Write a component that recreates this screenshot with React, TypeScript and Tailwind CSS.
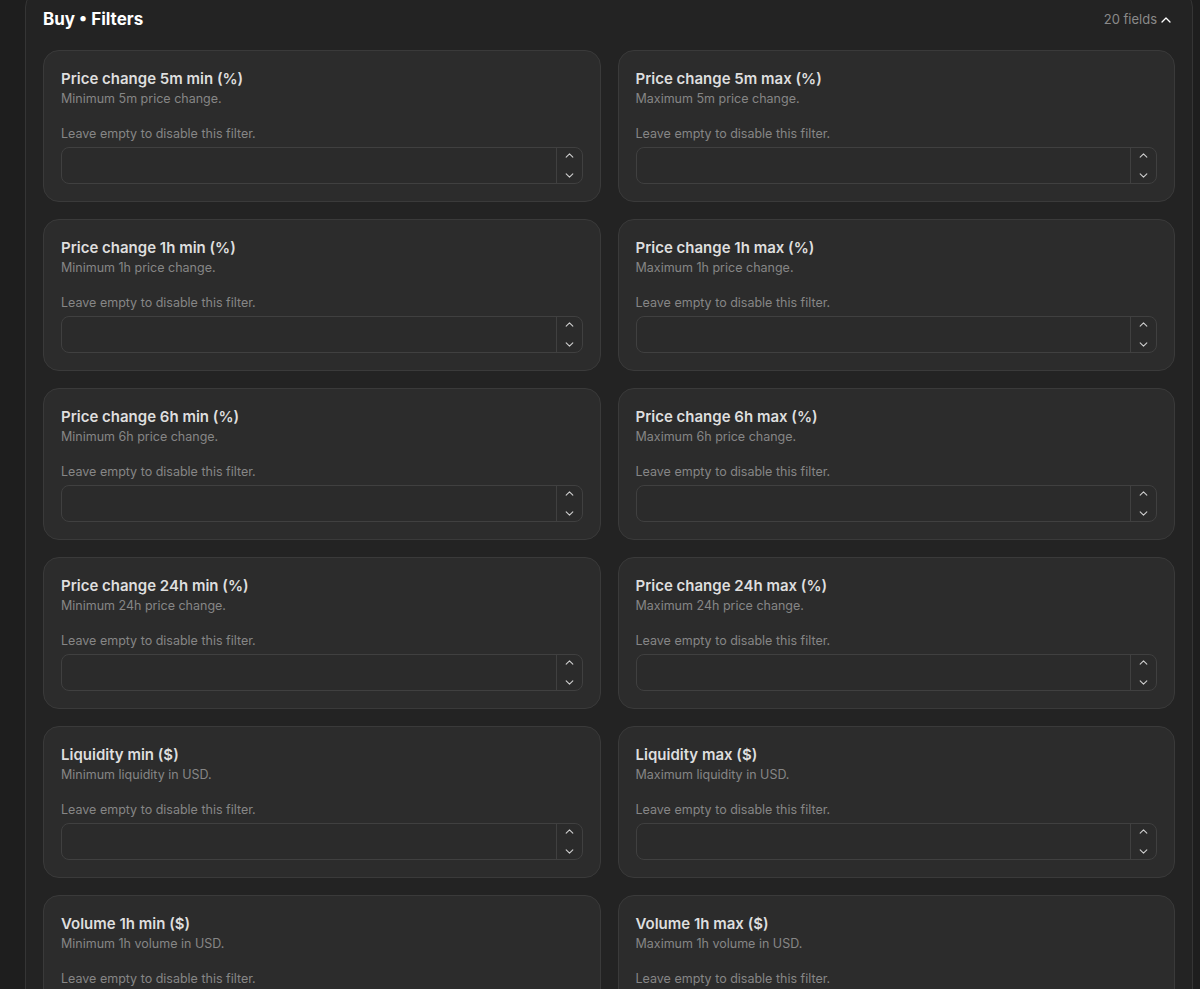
import React from "react";

type Field = { label: string; desc: string };

const fields: Field[] = [
  { label: "Price change 5m min (%)", desc: "Minimum 5m price change." },
  { label: "Price change 5m max (%)", desc: "Maximum 5m price change." },
  { label: "Price change 1h min (%)", desc: "Minimum 1h price change." },
  { label: "Price change 1h max (%)", desc: "Maximum 1h price change." },
  { label: "Price change 6h min (%)", desc: "Minimum 6h price change." },
  { label: "Price change 6h max (%)", desc: "Maximum 6h price change." },
  { label: "Price change 24h min (%)", desc: "Minimum 24h price change." },
  { label: "Price change 24h max (%)", desc: "Maximum 24h price change." },
  { label: "Liquidity min ($)", desc: "Minimum liquidity in USD." },
  { label: "Liquidity max ($)", desc: "Maximum liquidity in USD." },
  { label: "Volume 1h min ($)", desc: "Minimum 1h volume in USD." },
  { label: "Volume 1h max ($)", desc: "Maximum 1h volume in USD." },
  { label: "Volume 24h min ($)", desc: "Minimum 24h volume in USD." },
  { label: "Volume 24h max ($)", desc: "Maximum 24h volume in USD." },
  { label: "Market cap min ($)", desc: "Minimum market cap in USD." },
  { label: "Market cap max ($)", desc: "Maximum market cap in USD." },
  { label: "Holders min", desc: "Minimum number of holders." },
  { label: "Holders max", desc: "Maximum number of holders." },
  { label: "Age min (minutes)", desc: "Minimum token age in minutes." },
  { label: "Age max (minutes)", desc: "Maximum token age in minutes." },
];

function Chevron({ dir, className }: { dir: "up" | "down"; className?: string }) {
  return (
    <svg
      viewBox="0 0 10 6"
      className={className}
      fill="none"
      stroke="currentColor"
      strokeWidth={1.3}
      strokeLinecap="round"
      strokeLinejoin="round"
    >
      {dir === "up" ? <path d="M1 5 L5 1 L9 5" /> : <path d="M1 1 L5 5 L9 1" />}
    </svg>
  );
}

function NumberInput() {
  return (
    <div className="flex h-[37px] rounded-[8px] border border-[#404040] bg-[#2b2b2b]">
      <input
        type="text"
        className="min-w-0 flex-1 bg-transparent px-3 text-[13px] text-[#e5e5e5] outline-none"
      />
      <div className="flex w-[26px] flex-col items-center justify-center gap-[15px] border-l border-[#404040] text-[#cfcfcf]">
        <Chevron dir="up" className="h-[5px] w-[9px]" />
        <Chevron dir="down" className="h-[5px] w-[9px]" />
      </div>
    </div>
  );
}

function FieldCard({ field }: { field: Field }) {
  return (
    <div className="flex h-[152px] flex-col rounded-[16px] border border-[#3a3a3a] bg-[#2c2c2c] px-[17px] pt-[18px]">
      <div className="text-[15px] font-semibold leading-[20px] text-[#dedede]">{field.label}</div>
      <div className="text-[12.5px] leading-[19px] text-[#868686]">{field.desc}</div>
      <div className="mt-[16px] text-[12.5px] leading-[20px] text-[#868686]">
        Leave empty to disable this filter.
      </div>
      <div className="mt-[3px]">
        <NumberInput />
      </div>
    </div>
  );
}

export default function App() {
  return (
    <div
      className="h-screen overflow-hidden bg-[#1e1e1e]"
      style={{ fontFamily: "Inter, 'Noto Sans', sans-serif" }}
    >
      <div className="ml-[25px] mt-[-9px] w-[1168px] rounded-[16px] border border-[#353535] bg-[#232323] px-[17px] pb-[17px] pt-[16px]">
        <div className="mb-[18px] flex h-[24px] items-center justify-between">
          <div className="text-[17px] font-bold text-white">Buy • Filters</div>
          <div className="flex items-center gap-[4px] pr-[4px] text-[13px] text-[#8a8a8a]">
            <span>20 fields</span>
            <Chevron dir="up" className="h-[6px] w-[10px] text-white" />
          </div>
        </div>
        <div className="grid grid-cols-2 gap-[17px]">
          {fields.map((f) => (
            <FieldCard key={f.label} field={f} />
          ))}
        </div>
      </div>
    </div>
  );
}
